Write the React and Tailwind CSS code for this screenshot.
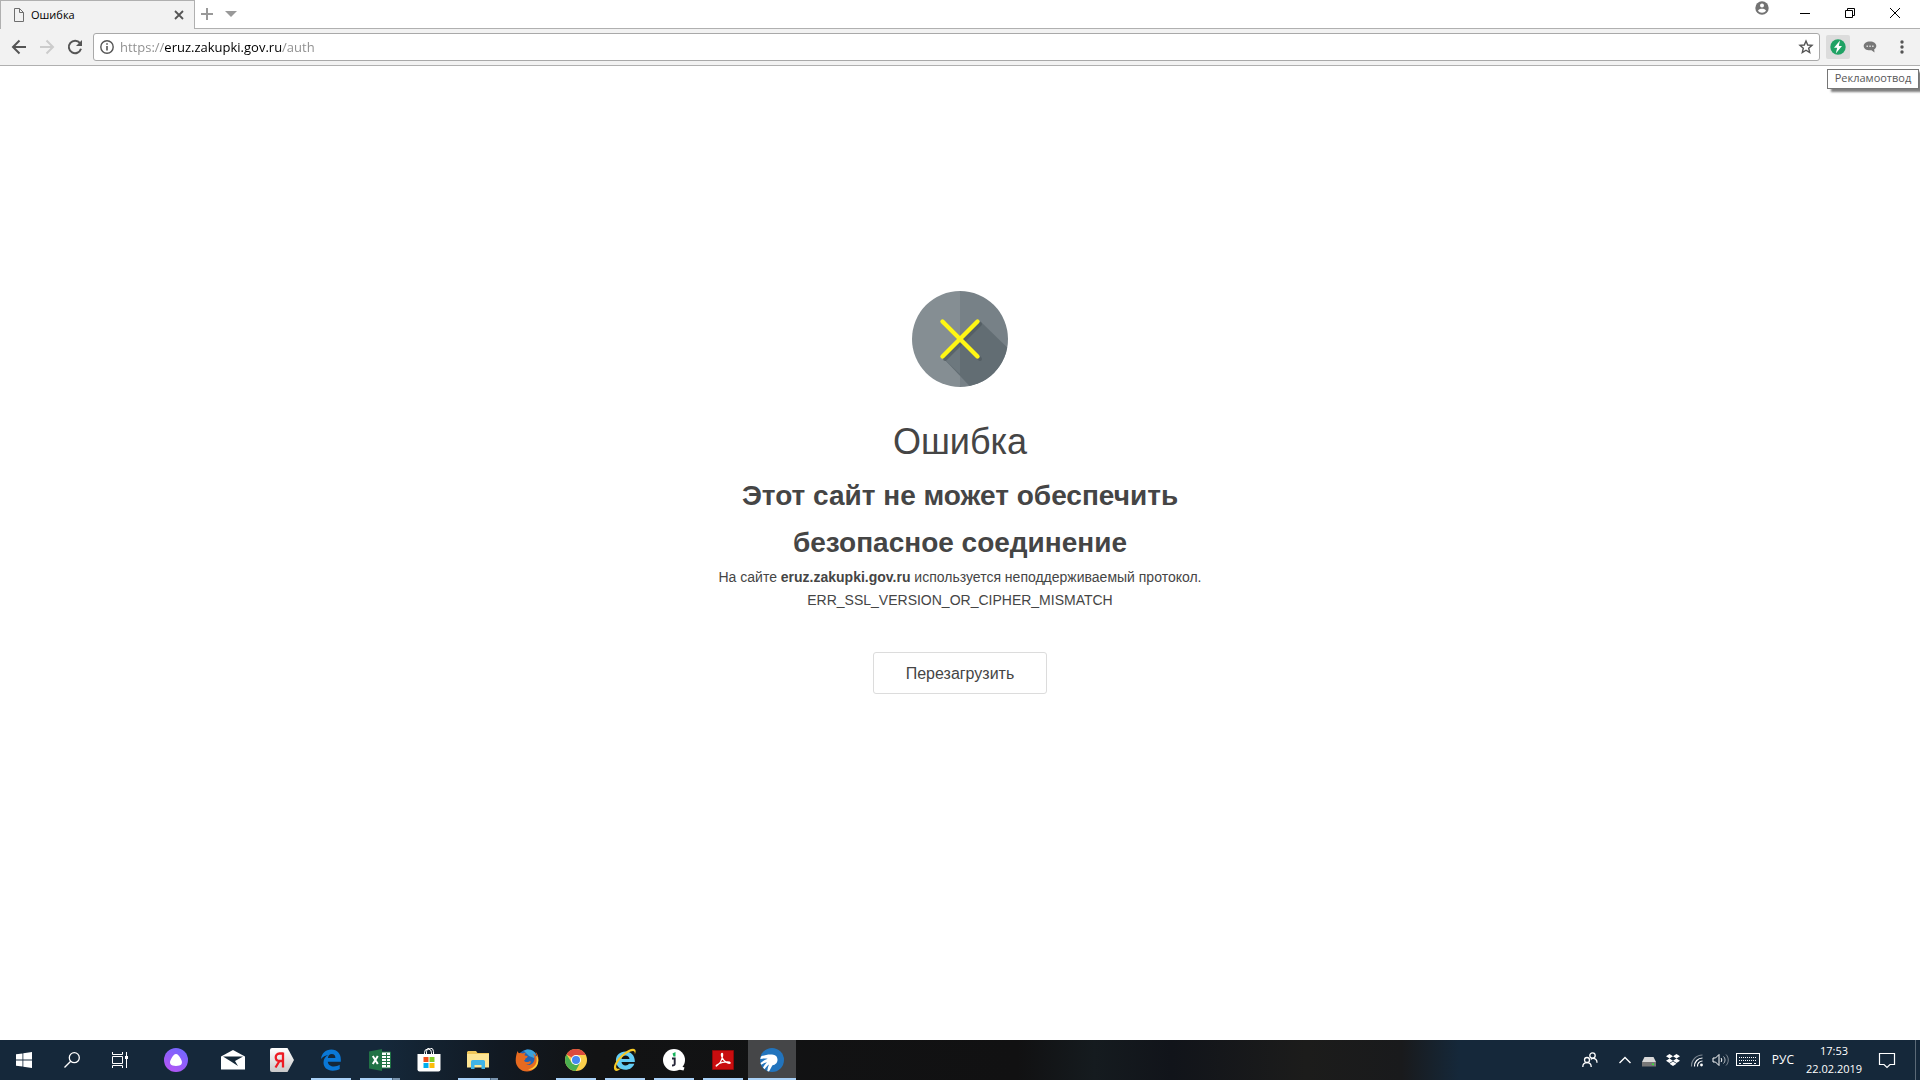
import { FaDropbox } from 'react-icons/fa';

/* ---------- Browser icons ---------- */

const PageIcon = () => (
  <svg width="12" height="14" viewBox="0 0 12 14" fill="none" stroke="#6e6e6e">
    <path d="M1.5.5h5l4 4v9h-9zM6.5.5v4h4" />
  </svg>
);

const BackIcon = () => (
  <svg width="16" height="16" viewBox="0 0 16 16" fill="none" stroke="currentColor" strokeWidth="2">
    <path d="M15 8H2.5M8.5 1.5L2 8l6.5 6.5" />
  </svg>
);

const ForwardIcon = () => (
  <svg width="16" height="16" viewBox="0 0 16 16" fill="none" stroke="currentColor" strokeWidth="2">
    <path d="M1 8h12.5M7.5 1.5L14 8l-6.5 6.5" />
  </svg>
);

const ReloadIcon = () => (
  <svg width="16" height="16" viewBox="0 0 16 16" fill="none" stroke="currentColor" strokeWidth="2">
    <path d="M13 4.2A6.2 6.2 0 1 0 14 9.8" />
    <path d="M15 1v6H9z" fill="currentColor" stroke="none" />
  </svg>
);

const InfoIcon = () => (
  <svg width="14" height="14" viewBox="0 0 14 14" fill="none" stroke="#555">
    <circle cx="7" cy="7" r="6.2" strokeWidth="1.4" />
    <path d="M7 6v4.5M7 3.2v1.6" strokeWidth="1.6" />
  </svg>
);

const StarIcon = () => (
  <svg width="16" height="16" viewBox="0 0 16 16" fill="none" stroke="#555" strokeWidth="1.4">
    <path d="M8 2l1.7 4 4.3.4-3.3 2.8 1 4.3L8 11.2l-3.7 2.3 1-4.3L2 6.400l4.300-.4z" />
  </svg>
);

const BoltIcon = () => (
  <svg width="16" height="16" viewBox="0 0 16 16">
    <circle cx="8" cy="8" r="7.700" fill="#1fa264" />
    <path d="M10 1.500L4 8.700h3.200L5.800 14.500 12 7H8.800z" fill="#fff" />
  </svg>
);

const BubbleIcon = () => (
  <svg width="14" height="12" viewBox="0 0 14 12">
    <path d="M7 .5C3.300.5.700 2.300.700 5S3.300 9.300 7 9.300l1.500-.1 3 2.300-.3-3.200c1.300-.8 2.100-1.900 2.100-3.300C13.300 2.300 10.700.5 7 .5z" fill="#777" />
    <path d="M3.500 4.500h1.500v1.500H3.500zM6.300 4.500h1.500v1.500H6.300zM9.100 4.500h1.500v1.500H9.100z" fill="#ddd" />
  </svg>
);

const ProfileIcon = () => (
  <svg width="14" height="14" viewBox="0 0 14 14">
    <circle cx="7" cy="7" r="6.700" fill="#737373" />
    <circle cx="7" cy="4.500" r="2" fill="#fff" />
    <path d="M3 9.800C3 8.300 5.500 7.700 7 7.700s4 .6 4 2.100C10.200 11 8.700 11.800 7 11.800S3.800 11 3 9.800z" fill="#fff" />
  </svg>
);

const ErrorIcon = () => (
  <svg width="96" height="96" viewBox="0 0 96 96">
    <clipPath id="disc">
      <circle cx="48" cy="48" r="48" />
    </clipPath>
    <g clipPath="url(#disc)">
      <path d="M0 0h48v96H0z" fill="#858e93" />
      <path d="M48 0h48v96H48z" fill="#778187" />
      <path d="M68 30l40 39v39H70L31 67l17-18z" fill="#626d73" />
      <path d="M31 67l17-18v34z" fill="#6d787e" />
    </g>
    <path d="M33 33l35 35M68 33L33 68" stroke="#4d575c" strokeOpacity=".6" strokeWidth="4" strokeLinecap="round" />
    <path d="M30.500 30.500l35 35M65.500 30.500l-35 35" stroke="#fff714" strokeWidth="4.400" strokeLinecap="round" />
  </svg>
);

/* ---------- Taskbar icons ---------- */

const StartIcon = () => (
  <svg width="16" height="16" viewBox="0 0 16 16" fill="#fff">
    <path d="M0 2.300l6.500-.9v6.200H0zM7.300 1.300L16 0v7.600H7.300zM0 8.400h6.500v6.200L0 13.700zM7.300 8.400H16V16l-8.700-1.300z" />
  </svg>
);

const SearchIcon = () => (
  <svg width="16" height="16" viewBox="0 0 16 16" fill="none" stroke="#fff" strokeWidth="1.300">
    <circle cx="10.300" cy="5.700" r="5" />
    <path d="M6.700 9.300L.5 15.500" />
  </svg>
);

const TaskViewIcon = () => (
  <svg width="16" height="16" viewBox="0 0 16 16" fill="none" stroke="#fff">
    <path d="M.5 0v2.500h10V0M.5 16v-2.500h10V16M.5 4.500h10v7H.5zM14.500 0v16" />
    <path d="M13 4h3v3h-3z" fill="#fff" stroke="none" />
  </svg>
);

const AliceIcon = () => (
  <svg width="24" height="24" viewBox="0 0 24 24">
    <linearGradient id="alice" x1="0.800" y1="0" x2="0.200" y2="1">
      <stop offset="0" stopColor="#6f67ff" />
      <stop offset="1" stopColor="#b755f4" />
    </linearGradient>
    <circle cx="12" cy="12" r="12" fill="url(#alice)" />
    <path d="M12 6c1.800 0 3 1.600 4.500 4.300 1.700 3 1.900 4.600.9 5.900-.9 1.300-2.800 1.700-5.400 1.700s-4.500-.4-5.400-1.700c-1-1.300-.8-2.900.9-5.900C9 7.600 10.200 6 12 6z" fill="#fff" />
  </svg>
);

const MailIcon = () => (
  <svg width="24" height="20" viewBox="0 0 24 20">
    <path d="M0 6.500L12 0l12 6.500V19.500H0z" fill="#fff" />
    <path d="M2 6.500h20l-8 4.500 3 5-7-4.500z" fill="#152838" />
  </svg>
);

const YandexIcon = () => (
  <svg width="24" height="24" viewBox="0 0 24 24">
    <linearGradient id="ya" x1="0" y1="0" x2="0" y2="1">
      <stop offset="0" stopColor="#fff" />
      <stop offset="1" stopColor="#c9c9c9" />
    </linearGradient>
    <path d="M2 0h15.500L24 12l-6.500 12H2a2 2 0 0 1-2-2V2a2 2 0 0 1 2-2z" fill="url(#ya)" />
    <path d="M13 4.500v15M13 5.500H9.500c-5 0-5 7.500 0 7.500H13M9.500 13l-4 6.500" fill="none" stroke="#ed1c24" strokeWidth="2.300" />
  </svg>
);

const EdgeIcon = () => (
  <svg width="22" height="22" viewBox="0 0 22 22" fill="#0a78d7">
    <path d="M1 10C1.600 4.500 5.500.5 11.300.5c6.200 0 9.500 4.600 9.500 9.700v2.600H7.800c.2 3.200 3 4.700 6 4.700 2.300 0 4.200-.6 5.900-1.700v4.300c-2 1.100-4.200 1.700-7 1.700-5.500 0-9.200-3.400-9.200-8.200 0-3.500 1.900-6.100 4.700-7.500C5.500 6.600 2.700 7.700 1 10zM7.900 9h7.500c0-2.500-1.300-3.900-3.600-3.900S8.300 6.700 7.900 9z" />
  </svg>
);

const ExcelIcon = () => (
  <svg width="22" height="22" viewBox="0 0 22 22">
    <path d="M12 3h9.500v16H12z" fill="#fff" stroke="#207245" />
    <path d="M13 6.500h8M13 9.500h8M13 12.500h8M13 15.500h8M17.500 4v14" stroke="#207245" />
    <path d="M0 2.500L13 0v22L0 19.500z" fill="#207245" />
    <path d="M3.800 7l5 8M8.800 7l-5 8" stroke="#fff" strokeWidth="2" />
  </svg>
);

const StoreIcon = () => (
  <svg width="24" height="24" viewBox="0 0 24 24">
    <path d="M7.500 7V4.500a3.500 3.500 0 0 1 7 0V7M9.500 6V3.500a3.500 3.500 0 0 1 7 0V6" fill="none" stroke="#fff" />
    <path d="M.5 6h23v15.500a2 2 0 0 1-2 2h-19a2 2 0 0 1-2-2z" fill="#fff" />
    <path d="M6.500 9h5v5h-5z" fill="#f1511b" />
    <path d="M12.500 9h5v5h-5z" fill="#80cc28" />
    <path d="M6.500 15h5v5h-5z" fill="#00adef" />
    <path d="M12.500 15h5v5h-5z" fill="#fbbc09" />
  </svg>
);

const ExplorerIcon = () => (
  <svg width="22" height="20" viewBox="0 0 22 20">
    <path d="M0 1.500h1V1h8l1.500 2H22v14H0z" fill="#f0c75a" />
    <path d="M0 4h22v13.500H0z" fill="#fde594" />
    <path d="M4 19v-7.500a1.500 1.500 0 0 1 1.500-1.500h11a1.500 1.500 0 0 1 1.500 1.500V19h-3.500v-4h-7v4z" fill="#3fb3e6" />
  </svg>
);

const FirefoxIcon = () => (
  <svg width="24" height="24" viewBox="0 0 24 24">
    <circle cx="12.500" cy="11.500" r="10" fill="#2263b5" />
    <path d="M9 3c4-3 10-1 12 3l-2 4-5-2z" fill="#3ba3dc" />
    <path d="M2.500 3c.3 1 .7 1.700 1.500 2.200 1.300-.5 2.700-.4 4 .2 1-.7 2-.9 3-.7-1.200.9-1.500 1.700-1.300 2.700l3 .5c-.1 1.500-1.500 2-2.400 2.600.1 1.300-.4 1.800-1.300 2 1 1.700 3.300 2 5.200.9 1-.5 2 .1 1.500 1-1 1.600-3 2.500-5 2.200 4.600 1.700 8.700-1 8.800-6 0-2-.6-3.500-1.500-4.800 3 1.500 3.200 3.700 3.300 5 .8-2.300.4-5-1-7.300 2.400 2.200 3.400 5.300 3 8.700C22.700 18.500 18 23.500 12 23.500 5.500 23.500.7 18.500.7 12.500.7 9 1.500 6 2.500 3z" fill="#e66a20" />
    <path d="M21 8c2.200 6.700-1 12-8 13.500 6.500 1.500 10.300-3.500 10.300-9C23.300 10 22.500 8.500 21 8z" fill="#fcc837" />
  </svg>
);

const ChromeIcon = () => (
  <svg width="22" height="22" viewBox="0 0 22 22">
    <circle cx="11" cy="11" r="11" fill="#fcd04b" />
    <path d="M11 11L1.500 5.500A11 11 0 0 1 20.800 6H11z" fill="#dd4b3e" />
    <path d="M1.500 5.500A11 11 0 0 0 10.600 22l4.700-8.500L11 16l-4.300-2.500z" fill="#4aaf50" />
    <circle cx="11" cy="11" r="5" fill="#fff" />
    <circle cx="11" cy="11" r="4" fill="#4688f1" />
  </svg>
);

const ExplorerBrowserIcon = () => (
  <svg width="24" height="24" viewBox="0 0 24 24">
    <path d="M12.500 3.500c5.500 0 9.300 4 9.300 9.500v1H8.500c.3 2.300 1.800 3.500 4 3.500 1.600 0 2.700-.6 3.400-1.700h5.400c-1.300 3.900-4.700 6-8.900 6-5.500 0-9.500-3.700-9.500-9.200s4.100-9.100 9.600-9.100zM8.500 11h8c-.2-2.200-1.800-3.500-4-3.500S8.800 8.800 8.500 11z" fill="#63cdf5" />
    <path d="M2 22.500C-1.500 19 4 10.500 10.500 5.500 15 2 20-.5 22 1.500c1 1 .8 3-.2 5C22 4.500 21.500 3 20 3c-3 0-7.500 3-11 6.500C5 13.500 1.500 19 4 20.500c1.500.8 3.500 0 5-1-2.500 2.500-5.500 4.300-7 3z" fill="#f6c825" />
  </svg>
);

const JinnIcon = () => (
  <svg width="22" height="22" viewBox="0 0 22 22">
    <circle cx="11" cy="11" r="11" fill="#fff" />
    <path d="M17 17l4.500 1.500-1 3-5-1z" fill="#fff" />
    <path d="M9.500 4.500l3-1.500v4.500h-2z" fill="#13b35a" />
    <path d="M9 9.500h2.700v5.500c0 1-.5 1.500-2.700 1.500" fill="none" stroke="#252537" strokeWidth="1.900" />
  </svg>
);

const AcrobatIcon = () => (
  <svg width="22" height="20" viewBox="0 0 22 20">
    <path d="M.5.5h21v19H.5z" fill="#c90d0f" stroke="#8f0809" />
    <path d="M4.500 16c3-2 5.500-6 6-10 .1-1.700.3-2.500-.5-2.500s-.7 1.500-.2 3c1 3 3.500 5.800 6.500 6.700 1.300.3 2 0 1.800-.6-.3-1-4.600-1-7.600-.3-2 .5-4.300 1.500-5.600 2.600-.8.700-.9 1.300-.4 1.100z" fill="none" stroke="#fff" strokeWidth="1.300" />
  </svg>
);

const SputnikIcon = () => (
  <svg width="24" height="24" viewBox="0 0 24 24">
    <circle cx="12" cy="12" r="12" fill="#2274bd" />
    <path d="M1 8.500C4.500 6.800 8.500 6.200 12 6.500c3.500.2 5.500 2.300 5.500 5.300 0 2.900-2 5.200-5 5.400-1 1.600-2 3.800-3.500 6.300l-1.700-.6c.2-2.300.8-4.400 1.700-6.400-1.500 1-3 2.500-4.500 4.700L3 19.500c1-2 2.300-3.700 4-5.200-2 .5-4 1.300-5.800 2.500L.5 15c2.200-2 4.500-3.400 7.200-4.200C5.300 10.300 3 10.300.3 11z" fill="#fff" />
  </svg>
);

/* ---------- Tray icons ---------- */

const PeopleIcon = () => (
  <svg width="16" height="16" viewBox="0 0 16 16" fill="none" stroke="#fff" strokeWidth="1.300">
    <circle cx="10.500" cy="3.500" r="2.700" />
    <circle cx="5" cy="8" r="2.500" />
    <path d="M.8 15c0-2.700 1.700-4.400 4.200-4.400S9.200 12.300 9.200 15M9 7.500c.5-.8 1-1.100 1.800-1.100 2.500 0 4.200 1.700 4.200 4.400" />
  </svg>
);

const ChevronIcon = () => (
  <svg width="14" height="8" viewBox="0 0 14 8" fill="none" stroke="#fff" strokeWidth="1.400">
    <path d="M1.500 7L7 1.500 12.500 7" />
  </svg>
);

const DriveIcon = () => (
  <svg width="14" height="10" viewBox="0 0 14 10">
    <path d="M2.500 0h9L14 5H0z" fill="#d8d8d8" />
    <path d="M0 5h14v4.500H0z" fill="#777" />
    <path d="M10 6.500h2v1.500h-2z" fill="#31e431" />
  </svg>
);

const WifiIcon = () => (
  <svg width="14" height="14" viewBox="0 0 14 14" fill="none" stroke="#fff" strokeWidth="1.200">
    <path d="M1.500 13.500A11 11 0 0 1 12.500 2" opacity=".45" />
    <path d="M4.500 13.500a8 8 0 0 1 8-8.500M7.500 13.500a5 5 0 0 1 5-5.500" />
    <circle cx="11.500" cy="12" r="1.400" fill="#fff" stroke="none" />
  </svg>
);

const VolumeIcon = () => (
  <svg width="18" height="14" viewBox="0 0 18 14" fill="none" stroke="#fff">
    <path d="M1 5h2.500L7 1.500v11L3.500 9H1zM9 5c1 1.200 1 2.800 0 4" />
    <path d="M11.500 3.500c2 2 2 5 0 7" opacity=".7" />
    <path d="M14 1.500c3 3 3 8 0 11" opacity=".45" />
  </svg>
);

const KeyboardIcon = () => (
  <svg width="24" height="14" viewBox="0 0 24 14" fill="none" stroke="#fff">
    <rect x=".5" y=".5" width="23" height="12" />
    <path d="M3 4.500h18M3 7.500h18" strokeDasharray="1 1" />
    <path d="M3 10.500h2M7 10.500h9M18 10.500h2" />
  </svg>
);

const NotificationIcon = () => (
  <svg width="18" height="18" viewBox="0 0 18 18" fill="none" stroke="#fff" strokeWidth="1.200">
    <path d="M1.500 2.500h15v11H12l-3 3-3-3H1.500z" />
  </svg>
);

const pinnedApps = [
  { name: 'Mail', icon: MailIcon },
  { name: 'Yandex', icon: YandexIcon },
  { name: 'Edge', icon: EdgeIcon, running: true },
  { name: 'Excel', icon: ExcelIcon, running: true, stacked: true },
  { name: 'Store', icon: StoreIcon },
  { name: 'Explorer', icon: ExplorerIcon, running: true, stacked: true },
  { name: 'Firefox', icon: FirefoxIcon },
  { name: 'Chrome', icon: ChromeIcon, running: true },
  { name: 'Internet Explorer', icon: ExplorerBrowserIcon, running: true },
  { name: 'Jinn', icon: JinnIcon, running: true },
  { name: 'Acrobat', icon: AcrobatIcon, running: true },
  { name: 'Sputnik', icon: SputnikIcon, running: true, active: true },
];

const systemButtons = [
  { name: 'Start', icon: StartIcon },
  { name: 'Search', icon: SearchIcon },
  { name: 'Task view', icon: TaskViewIcon },
];

function TabStrip() {
  return (
    <div className="flex h-[29px] bg-white">
      <div className="flex w-[195px] items-center border-t border-r border-l border-[#b0b0b0] bg-[#f2f2f2] pr-2 pl-3">
        <PageIcon />
        <span className="ml-1.5 flex-1 text-[11px] leading-4 text-black">Ошибка</span>
        <button aria-label="Close tab" className="p-0.5">
          <svg width="10" height="10" viewBox="0 0 10 10" stroke="#555" strokeWidth="1.800">
            <path d="M1 1l8 8M9 1L1 9" />
          </svg>
        </button>
      </div>
      <div className="flex flex-1 border-b border-[#b0b0b0]">
        <button aria-label="New tab" className="flex w-6 items-center justify-center">
          <svg width="12" height="12" viewBox="0 0 12 12" stroke="#999" strokeWidth="2">
            <path d="M6 0v12M0 6h12" />
          </svg>
        </button>
        <button aria-label="Tab list" className="flex w-6 items-center justify-center">
          <svg width="12" height="6" viewBox="0 0 12 6" fill="#999">
            <path d="M0 0h12L6 6z" />
          </svg>
        </button>
        <div className="flex-1" />
        <button aria-label="Profile" className="flex w-8 items-start justify-center pt-px">
          <ProfileIcon />
        </button>
        <button aria-label="Minimize" className="ml-1 flex w-[45px] items-center justify-center">
          <svg width="10" height="10" viewBox="0 0 10 10" stroke="#000">
            <path d="M0 4.500h10" />
          </svg>
        </button>
        <button aria-label="Restore" className="flex w-[45px] items-center justify-center pb-0.5">
          <svg width="10" height="10" viewBox="0 0 10 10" fill="none" stroke="#000">
            <path d="M.5 2.500h7v7h-7zM2.500 2.500v-2h7v7h-2" />
          </svg>
        </button>
        <button aria-label="Close" className="mr-0.5 flex w-[46px] items-center justify-center pb-0.5">
          <svg width="10" height="10" viewBox="0 0 10 10" stroke="#000">
            <path d="M0 0l10 10M10 0L0 10" />
          </svg>
        </button>
      </div>
    </div>
  );
}

function Toolbar() {
  return (
    <div className="flex h-[37px] items-center border-b border-[#b0b0b0] bg-[#f2f2f2] pb-px pl-[5px]">
      <button aria-label="Back" className="flex size-7 items-center justify-center text-[#555]">
        <BackIcon />
      </button>
      <button aria-label="Forward" className="flex size-7 items-center justify-center text-[#ccc]">
        <ForwardIcon />
      </button>
      <button aria-label="Reload" className="flex size-7 items-center justify-center text-[#555]">
        <ReloadIcon />
      </button>
      <div className="ml-1 flex h-7 flex-1 items-center rounded-[3px] border border-[#a9a9a9] bg-white pr-[5px] pl-1.5">
        <InfoIcon />
        {/* scheme and path are grey, the host is black */}
        <input
          type="text"
          aria-label="Address"
          defaultValue="https://eruz.zakupki.gov.ru/auth"
          className="ml-1.5 h-6 flex-1 bg-[linear-gradient(to_right,#8c8c8c_45px,#000_45px,#000_161px,#8c8c8c_161px)] bg-clip-text text-[13px] text-transparent outline-none"
        />
        <button aria-label="Bookmark">
          <StarIcon />
        </button>
      </div>
      <div className="relative ml-1.5">
        <button aria-label="Рекламоотвод" className="flex size-6 items-center justify-center rounded-[2px] bg-[#dcdcdc]">
          <BoltIcon />
        </button>
        <div role="tooltip" className="absolute top-[34px] left-px flex h-5 w-[92px] items-center justify-center border border-[#767676] bg-white text-[11px] text-[#575757] shadow-[4px_3px_2px_rgba(0,0,0,0.5)]">
          Рекламоотвод
        </div>
      </div>
      <button aria-label="Messages" className="ml-2 flex size-6 items-center justify-center">
        <BubbleIcon />
      </button>
      <button aria-label="Menu" className="mr-1.5 ml-2 flex size-6 items-center justify-center">
        <svg width="4" height="14" viewBox="0 0 4 14" fill="#555">
          <circle cx="2" cy="2" r="1.700" />
          <circle cx="2" cy="7" r="1.700" />
          <circle cx="2" cy="12" r="1.700" />
        </svg>
      </button>
    </div>
  );
}

function ErrorPage() {
  return (
    <main className="flex flex-1 flex-col items-center bg-white pt-[225px] text-center font-['Liberation_Sans',Arial,sans-serif] text-[#454545]">
      <ErrorIcon />
      <h1 className="mt-[35px] text-4xl leading-10">Ошибка</h1>
      <h2 className="mt-2.5 max-w-[500px] text-[28px] leading-[47px] font-bold">
        Этот сайт не может обеспечить безопасное соединение
      </h2>
      <p className="text-sm leading-[23px]">
        На сайте <strong>eruz.zakupki.gov.ru</strong> используется неподдерживаемый протокол.
      </p>
      <p className="text-sm leading-[23px]">ERR_SSL_VERSION_OR_CIPHER_MISMATCH</p>
      <button className="mt-10 h-[42px] rounded-[3px] border border-[#dcdcdc] px-8 pt-0.5 text-base">Перезагрузить</button>
    </main>
  );
}

function Taskbar() {
  return (
    <footer className="flex h-10 items-center bg-[linear-gradient(to_right,#15283a_0%,#15283a_20%,#111922_26%,#121314_31%,#111112_53%,#151b1f_57%,#11141a_61%,#1c1c1b_68%,#191a1c_73%,#15283a_76%,#15283a_100%)] text-white">
      {systemButtons.map(({ name, icon: Icon }) => (
        <button key={name} aria-label={name} className="flex h-10 w-12 items-center justify-center">
          <Icon />
        </button>
      ))}
      <button aria-label="Алиса" className="mr-[9px] ml-2 flex h-10 w-12 items-center justify-center">
        <AliceIcon />
      </button>
      <div className="flex gap-px">
        {pinnedApps.map(({ name, icon: Icon, running, stacked, active }) => (
          <button
            key={name}
            aria-label={name}
            className={`relative flex h-10 w-12 items-center justify-center ${active ? 'bg-[#454648]' : ''}`}
          >
            <Icon />
            {running && (
              <span className={`absolute bottom-0 flex h-0.5 bg-[#a9d1f7] ${active ? 'inset-x-0' : 'inset-x-1'}`}>
                {stacked && <span className="ml-auto w-2 border-l border-[#4d6780] bg-[#7893ad]" />}
              </span>
            )}
          </button>
        ))}
      </div>

      {/* Tray */}
      <div className="ml-auto flex h-10 items-center">
        <button aria-label="People" className="mr-5">
          <PeopleIcon />
        </button>
        <div className="flex items-center gap-2.5">
          <ChevronIcon />
          <div className="pt-1">
            <DriveIcon />
          </div>
          <FaDropbox size={14} />
          <WifiIcon />
        </div>
        <div className="ml-2 flex items-center gap-1.5">
          <VolumeIcon />
          <KeyboardIcon />
        </div>
        <span className="ml-3 text-[12px]">РУС</span>
        <div className="mr-4 ml-3 flex w-[56px] flex-col items-center text-[11px] leading-[18px]">
          <span>17:53</span>
          <span>22.02.2019</span>
        </div>
        <button aria-label="Notifications">
          <NotificationIcon />
        </button>
        <div className="ml-[19px] h-10 w-[5px] border-l border-[#5b6976]" />
      </div>
    </footer>
  );
}

export default function App() {
  return (
    <div className="flex h-screen flex-col overflow-hidden font-['Open_Sans','Noto_Sans',sans-serif]">
      <TabStrip />
      <Toolbar />
      <ErrorPage />
      <Taskbar />
    </div>
  );
}
